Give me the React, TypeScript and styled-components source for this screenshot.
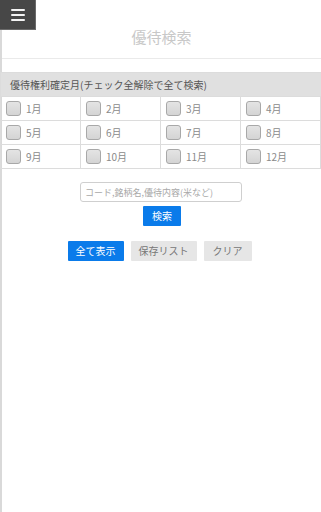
import * as React from 'react';
import styled, { createGlobalStyle } from 'styled-components';

const GlobalStyle = createGlobalStyle`
  html, body {
    margin: 0;
    padding: 0;
    background: #fff;
    font-family: "Noto Sans CJK JP", "Liberation Sans", sans-serif;
  }
`;

const Page = styled.div`
  width: 321px;
  height: 512px;
  position: relative;
  overflow: hidden;
  background: #fff;
`;

const MenuButton = styled.div`
  position: absolute;
  left: 0;
  top: 0;
  width: 36px;
  height: 30px;
  background: #474747;
  border-right: 1px solid #6a6a6a;
  border-bottom: 1px solid #6a6a6a;
  display: flex;
  flex-direction: column;
  align-items: center;
  justify-content: center;
  gap: 3px;
  box-sizing: border-box;
  z-index: 2;
`;

const MenuBar = styled.span`
  display: block;
  width: 14px;
  height: 2px;
  background: #f4f4f4;
  border-radius: 1px;
`;

const Body = styled.div`
  height: 100%;
  border-left: 2px solid #d9d9d9;
  box-sizing: border-box;
  display: flex;
  flex-direction: column;
`;

const Header = styled.div`
  height: 59px;
  border-bottom: 1px solid #eaeaea;
  display: flex;
  align-items: flex-end;
  justify-content: center;
  padding-bottom: 11px;
  box-sizing: border-box;
`;

const Title = styled.h1`
  margin: 0;
  font-size: 15px;
  font-weight: normal;
  color: #c8c8c8;
  line-height: 20px;
`;

const Table = styled.div`
  margin: 13px 0 0 -2px;
  width: 321px;
  border: 1px solid #dcdcdc;
  border-right: none;
  box-sizing: border-box;
`;

const TableHead = styled.div`
  height: 23px;
  background: #e0e0e0;
  display: flex;
  align-items: center;
  padding-left: 9px;
  font-size: 10px;
  color: #555;
`;

const Grid = styled.div`
  display: grid;
  grid-template-columns: repeat(4, 1fr);
`;

const Cell = styled.label`
  height: 24px;
  display: flex;
  align-items: center;
  gap: 5px;
  padding-left: 5px;
  border-top: 1px solid #dcdcdc;
  border-right: 1px solid #dcdcdc;
  box-sizing: border-box;
  font-size: 10px;
  color: #8a8a8a;
`;

const Box = styled.span`
  width: 15px;
  height: 15px;
  border: 1px solid #a8a8a8;
  border-radius: 3px;
  background: linear-gradient(#e4e4e4, #d4d4d4);
  box-sizing: border-box;
`;

const Search = styled.div`
  margin-top: 13px;
  display: flex;
  flex-direction: column;
  align-items: center;
  gap: 4px;
`;

const Input = styled.input`
  width: 162px;
  height: 20px;
  margin-left: -1px;
  border: 1px solid #cfcfcf;
  border-radius: 3px;
  box-sizing: border-box;
  padding: 0 4px;
  font-family: inherit;
  font-size: 9px;
  outline: none;
  &::placeholder {
    color: #a9a9a9;
  }
`;

const Button = styled.button<{ $primary?: boolean; $pad?: number }>`
  height: 20px;
  padding: 0 ${(p) => p.$pad ?? 8}px;
  border: none;
  border-radius: 1px;
  font-family: inherit;
  font-size: 10px;
  line-height: 20px;
  background: ${(p) => (p.$primary ? '#0a7bea' : '#e6e6e6')};
  color: ${(p) => (p.$primary ? '#fff' : '#777')};
`;

const SearchButton = styled(Button)`
  margin-left: 1px;
`;

const ActionRow = styled.div`
  margin-top: 15px;
  margin-left: -4px;
  display: flex;
  justify-content: center;
  gap: 7px;
`;

const months = Array.from({ length: 12 }, (_, i) => `${i + 1}月`);

export default function App(): JSX.Element {
  return (
    <Page>
      <GlobalStyle />
      <MenuButton>
        <MenuBar />
        <MenuBar />
        <MenuBar />
      </MenuButton>
      <Body>
        <Header>
          <Title>優待検索</Title>
        </Header>
        <Table>
          <TableHead>優待権利確定月(チェック全解除で全て検索)</TableHead>
          <Grid>
            {months.map((m) => (
              <Cell key={m}>
                <Box />
                {m}
              </Cell>
            ))}
          </Grid>
        </Table>
        <Search>
          <Input placeholder="コード,銘柄名,優待内容(米など)" />
          <SearchButton $primary $pad={9}>検索</SearchButton>
        </Search>
        <ActionRow>
          <Button $primary>全て表示</Button>
          <Button>保存リスト</Button>
          <Button $pad={9}>クリア</Button>
        </ActionRow>
      </Body>
    </Page>
  );
}
